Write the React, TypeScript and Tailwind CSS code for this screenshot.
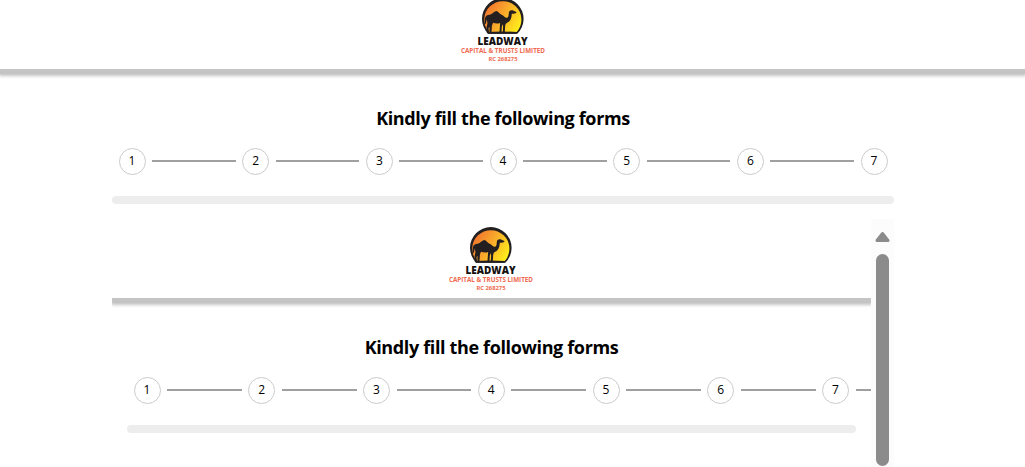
const steps = [1, 2, 3, 4, 5, 6, 7];

function Logo() {
  return (
    <svg width="92" height="72" viewBox="0 0 92 72" className="block shrink-0 overflow-visible" fontFamily="Open Sans, Noto Sans, sans-serif" textAnchor="middle">
      <defs>
        <linearGradient id="sun" x1="0" y1="0.25" x2="1" y2="0.75">
          <stop offset="0" stopColor="#f0702e" />
          <stop offset="0.45" stopColor="#f9a62b" />
          <stop offset="1" stopColor="#ffee1c" />
        </linearGradient>
      </defs>
      <path d="M31.3 43.8A20.8 20.8 0 1 1 60.3 43.8Z" fill="#231f20" />
      <path d="M31.8 42A18.6 18.6 0 1 1 59.8 42Z" fill="url(#sun)" />
      <g transform="translate(20.8 4) scale(.3333)" fill="#231f20">
        <path d="M21 76C21 67 27 62 36 62C44 61 48 52 55 51C62 52 65 60 73 63C79 66 82 72 88 71C95 69 91 57 95 51C99 48 104 49 107 50L116 54C116 59 109 59 102 59C101 71 99 82 88 86C84 88 83 91 82 97L81 115H75L76 98L75 90L72 98L71 115H65L67 87C58 90 51 88 46 86C43 91 42 95 42 101L41 115H35L35 98L32 103L34 115H28L26 101L29 88L27 76L24 89L20 91Z" />
        <path d="M26 114Q70 111 119 114L116 119H30Z" />
      </g>
      <text x="45.5" y="54.5" fontSize="10.5" fontWeight="800" textLength="50" lengthAdjust="spacingAndGlyphs" fill="#151111">LEADWAY</text>
      <text x="46" y="63.3" fontSize="6.8" fontWeight="700" textLength="84" lengthAdjust="spacingAndGlyphs" fill="#f06a50">CAPITAL &amp; TRUSTS LIMITED</text>
      <text x="46" y="70.7" fontSize="5.8" fontWeight="700" textLength="29" lengthAdjust="spacingAndGlyphs" fill="#f06a50">RC 268275</text>
    </svg>
  );
}

function Header() {
  return (
    <header className="flex h-[79px] shrink-0 justify-center bg-white shadow-[0_5px_0_#c4c4c4,0_6px_3px_1px_#c4c4c4]">
      <Logo />
    </header>
  );
}

function Title() {
  return (
    <h1 className="text-center font-['Open_Sans','Noto_Sans',sans-serif] text-[18px] leading-6 font-bold tracking-[-0.36px] text-black">
      Kindly fill the following forms
    </h1>
  );
}

function Step({ n }: { n: number }) {
  return (
    <span className="flex size-[27px] shrink-0 items-center justify-center rounded-full border border-[#cbcbcb] bg-white pb-px font-['Open_Sans','Noto_Sans',sans-serif] text-[12px] leading-4 text-black">
      {n}
    </span>
  );
}

function Steps({ trailing = false }: { trailing?: boolean }) {
  return (
    <div className="flex items-center">
      {steps.map((n) => (
        <div key={n} className={n < 7 ? "flex min-w-0 flex-1 items-center" : "flex items-center"}>
          <Step n={n} />
          {n < 7 && <span className="mx-[6.5px] -mt-px h-0.5 flex-1 bg-[#a0a0a0]" />}
        </div>
      ))}
      {trailing && <span className="-mt-px ml-[7px] h-0.5 w-[15px] shrink-0 bg-[#a0a0a0]" />}
    </div>
  );
}

function ScrollBar() {
  return (
    <div className="flex w-[23px] shrink-0 flex-col items-center bg-[#fcfcfc] pt-3">
      <svg width="15" height="12" viewBox="0 0 15 12" className="block">
        <path d="M7.5 2.5L13 9.5H2Z" fill="#8b8b8b" stroke="#8b8b8b" strokeWidth="3" strokeLinejoin="round" />
      </svg>
      <div className="mt-[11px] h-[212px] w-[13px] rounded-full bg-[#8b8b8b]" />
    </div>
  );
}

export default function App() {
  return (
    <div className="h-[467px] w-full overflow-hidden bg-white">
      <div className="-mt-2.5 flex flex-col">
        <div className="flex flex-col [&>header]:pr-5">
          <Header />
        </div>
        <main className="ml-28 flex w-[782px] flex-col pt-[37px]">
          <Title />
          <div className="mt-[18px] px-[6.5px]">
            <Steps />
          </div>
          <div className="mt-[21px] h-2 rounded-full bg-[#ededed]" />
          <div className="mt-[15px] flex h-[248px] overflow-hidden">
            <section className="w-[759px] overflow-hidden [&>header]:pr-px">
              <Header />
              <div className="pt-[37px]">
                <Title />
                <div className="mt-[18px] pl-[21.5px]">
                  <Steps trailing />
                </div>
                <div className="mt-[21px] mr-[15px] ml-[15px] h-2 rounded-full bg-[#ededed]" />
              </div>
            </section>
            <ScrollBar />
          </div>
        </main>
      </div>
    </div>
  );
}
